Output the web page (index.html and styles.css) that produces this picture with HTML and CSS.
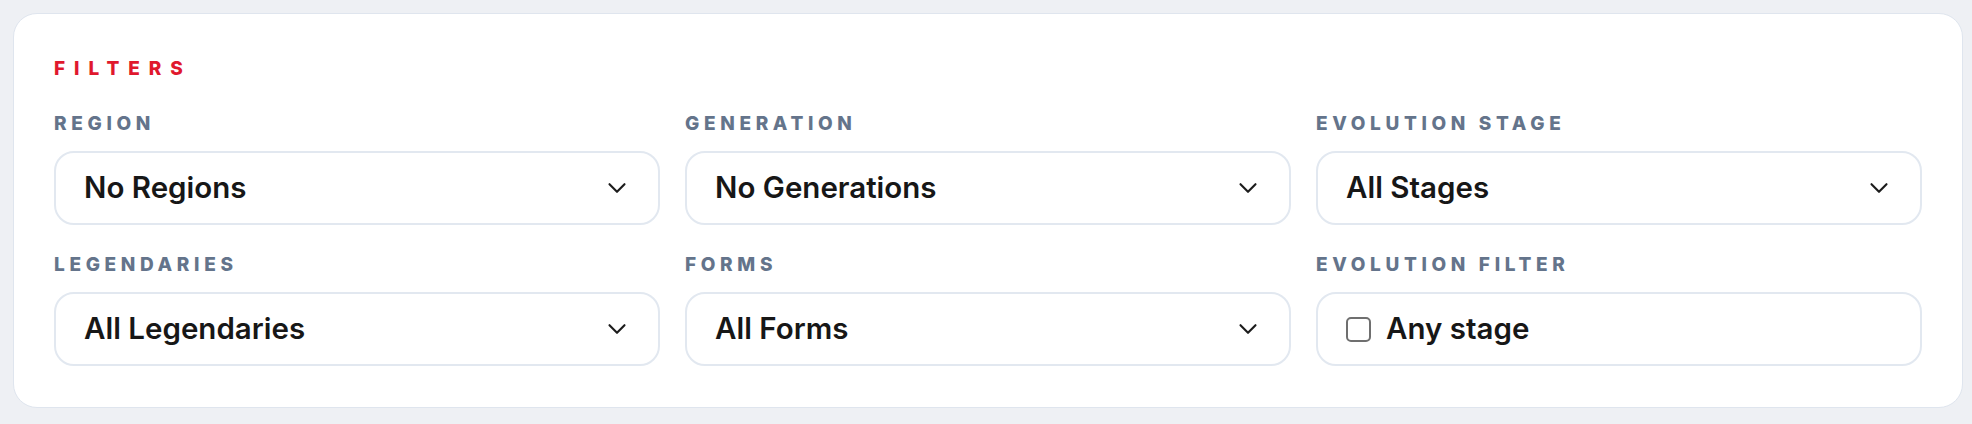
FILE: index.html
```html
<!DOCTYPE html>
<html lang="en">
<head>
<meta charset="utf-8">
<title>Filters</title>
<link rel="stylesheet" href="styles.css">
</head>
<body>
<section class="card">
  <h2 class="heading">FILTERS</h2>
  <div class="grid">
    <div class="field">
      <div class="label">REGION</div>
      <div class="select"><span class="value">No Regions</span><svg class="chev" viewBox="0 0 24 24"><path d="m6 9 6 6 6-6"/></svg></div>
    </div>
    <div class="field">
      <div class="label">GENERATION</div>
      <div class="select"><span class="value">No Generations</span><svg class="chev" viewBox="0 0 24 24"><path d="m6 9 6 6 6-6"/></svg></div>
    </div>
    <div class="field">
      <div class="label">EVOLUTION STAGE</div>
      <div class="select"><span class="value">All Stages</span><svg class="chev" viewBox="0 0 24 24"><path d="m6 9 6 6 6-6"/></svg></div>
    </div>
    <div class="field">
      <div class="label">LEGENDARIES</div>
      <div class="select"><span class="value">All Legendaries</span><svg class="chev" viewBox="0 0 24 24"><path d="m6 9 6 6 6-6"/></svg></div>
    </div>
    <div class="field">
      <div class="label">FORMS</div>
      <div class="select"><span class="value">All Forms</span><svg class="chev" viewBox="0 0 24 24"><path d="m6 9 6 6 6-6"/></svg></div>
    </div>
    <div class="field">
      <div class="label">EVOLUTION FILTER</div>
      <label class="select check-box"><span class="box"></span><span class="value">Any stage</span></label>
    </div>
  </div>
</section>
</body>
</html>
```

FILE: styles.css
```css
* { box-sizing: border-box; }
html, body { margin: 0; }
body {
  background: #eef0f4;
  padding: 13px 9px 0 13px;
  font-family: Inter, "Noto Sans", sans-serif;
  height: 424px;
  overflow: hidden;
}
.card {
  background: #ffffff;
  border: 1px solid #dfe5ee;
  border-radius: 24px;
  padding: 40px 40px 41px;
}
.heading {
  margin: 0 0 27px;
  font-size: 19px;
  line-height: 30px;
  font-weight: 800;
  letter-spacing: 0.47em;
  color: #e0182d;
}
.grid {
  display: grid;
  grid-template-columns: repeat(3, 1fr);
  column-gap: 25px;
  row-gap: 27px;
}
.field {
  display: flex;
  flex-direction: column;
  gap: 15px;
}
.label {
  font-size: 19px;
  line-height: 25px;
  font-weight: 800;
  letter-spacing: 0.245em;
  color: #64748b;
}
.select {
  height: 74px;
  border: 2px solid #e2e8f0;
  border-radius: 20px;
  display: flex;
  align-items: center;
  justify-content: space-between;
  padding: 0 26px 0 28px;
  background: #fff;
}
.value {
  font-size: 29.5px;
  font-weight: 600;
  color: #171717;
  line-height: 1;
}
.chev {
  width: 30px;
  height: 30px;
  fill: none;
  stroke: #1c1c1c;
  stroke-width: 1.7;
  stroke-linecap: round;
  stroke-linejoin: round;
}
.check-box {
  justify-content: flex-start;
  gap: 15px;
}
.box {
  width: 25px;
  height: 25px;
  border: 2px solid #6f6f6f;
  border-radius: 5px;
  background: #fff;
  flex: none;
}
```
